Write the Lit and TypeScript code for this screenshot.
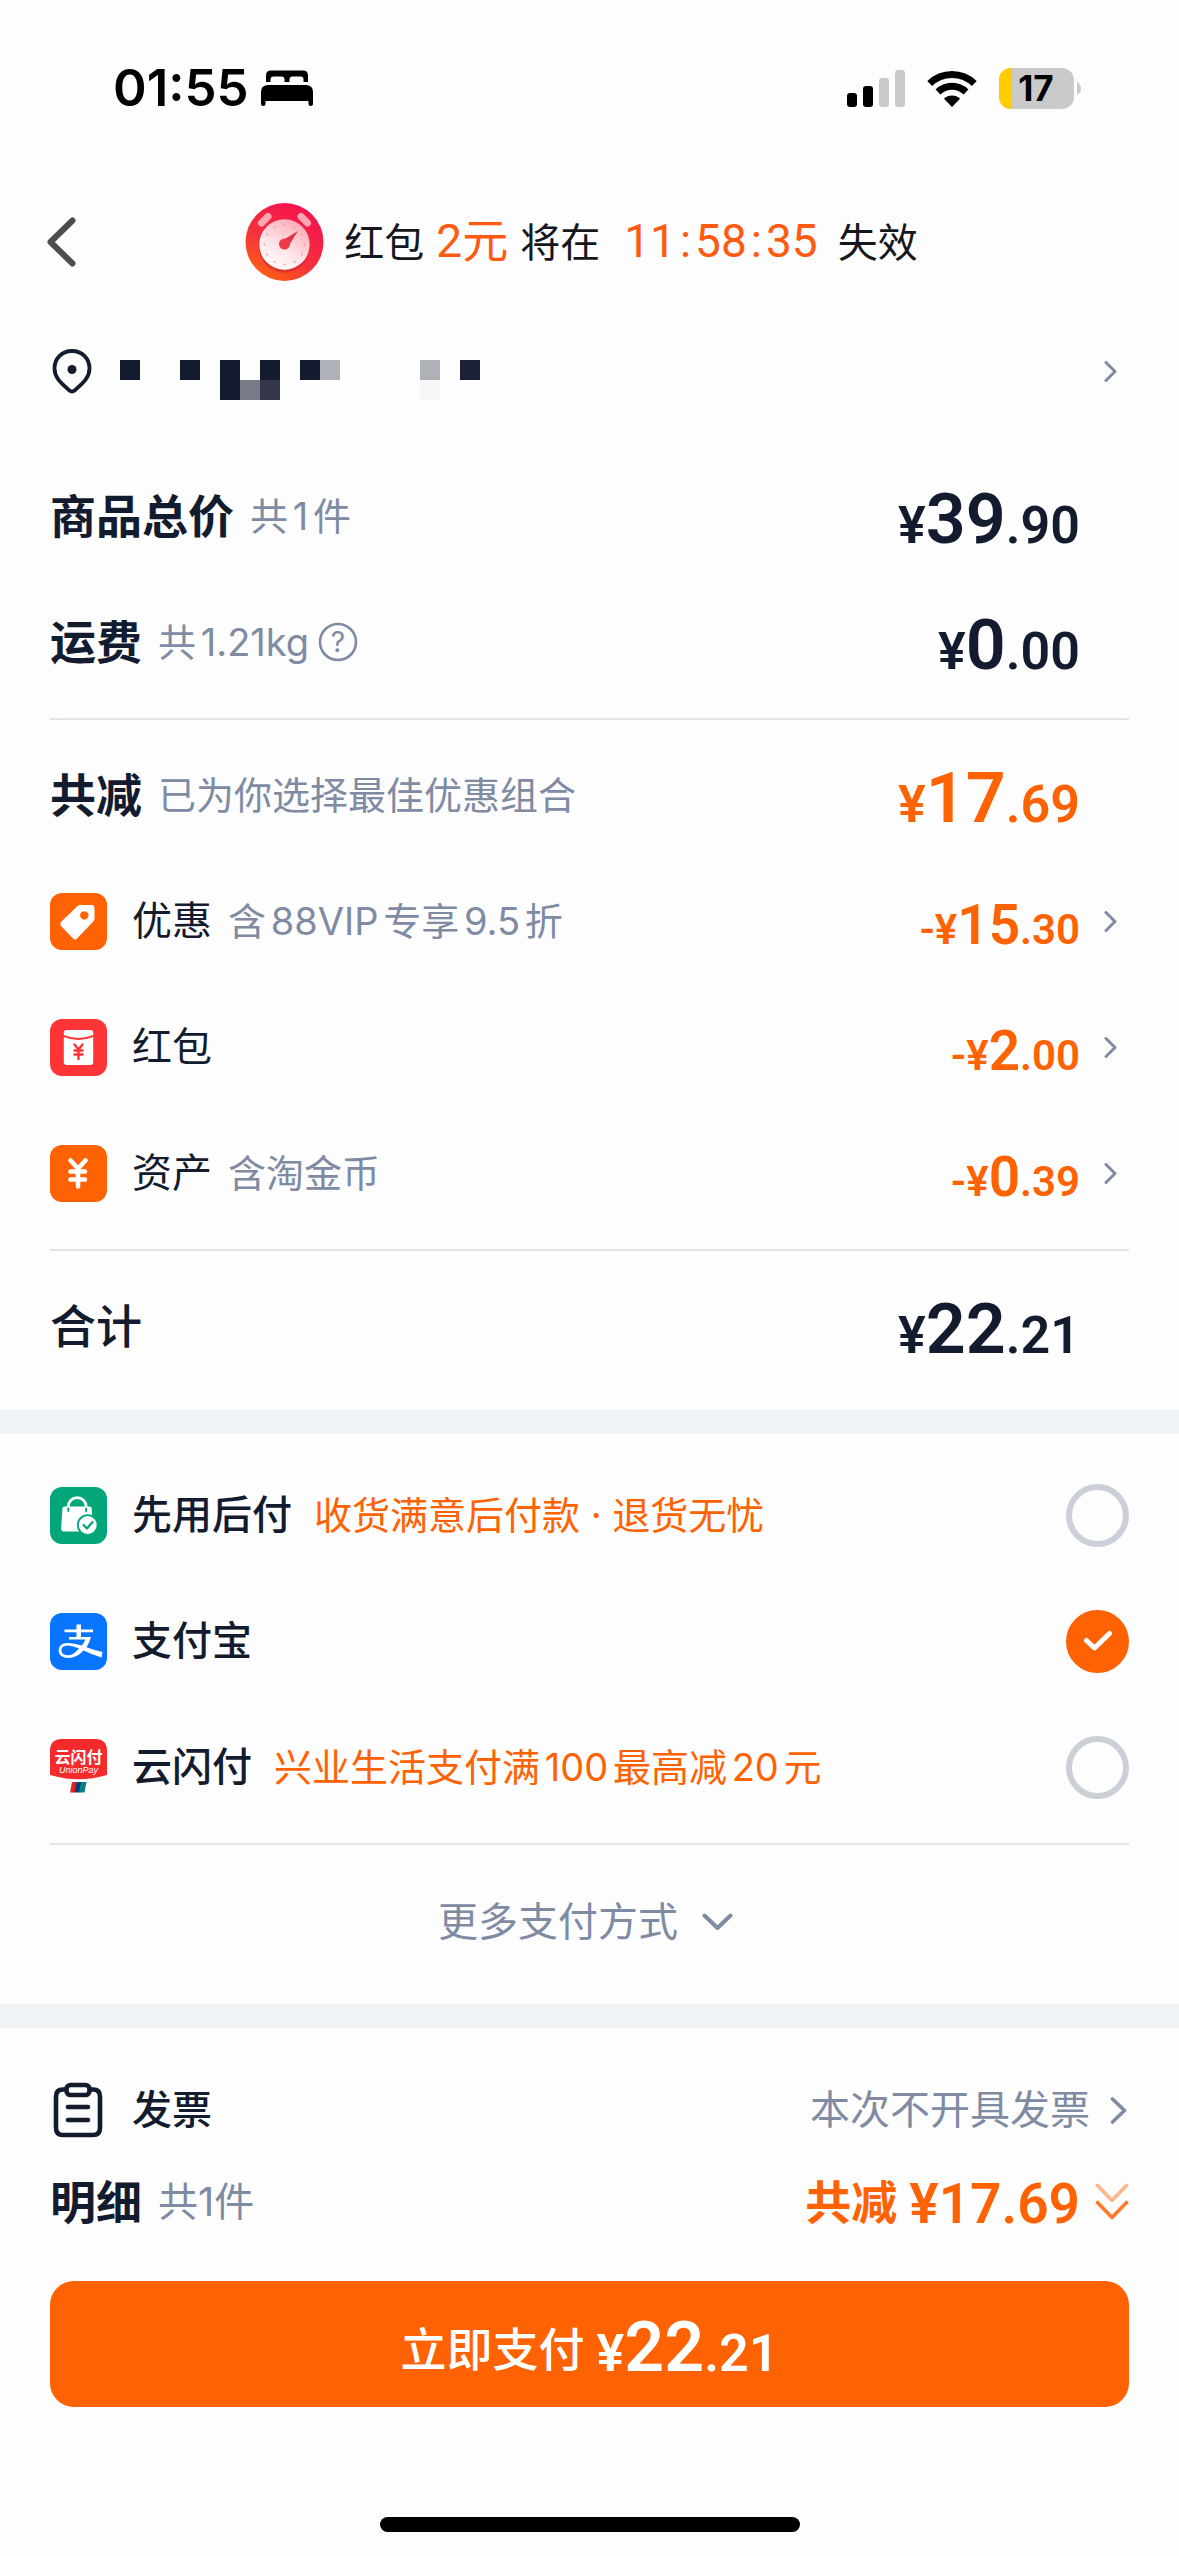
import { LitElement, html, svg, css, nothing } from "lit";
import type { TemplateResult } from "lit";
import { customElement, property, state } from "lit/decorators.js";

const chevron = html`<svg class="chev" viewBox="0 0 13 21" width="13" height="21" aria-hidden="true">
  <path d="M2 1.5 L11 10.5 L2 19.5" fill="none" stroke="#7f8ba3" stroke-width="3" stroke-linecap="round" stroke-linejoin="round"/>
</svg>`;

const tile = (fill: string, content: unknown) => html`<svg class="tile" viewBox="0 0 57 57" width="57" height="57" aria-hidden="true">
  <rect width="57" height="57" rx="12" fill=${fill}/>${content}
</svg>`;

const icons: Record<string, TemplateResult> = {
  tag: tile("#ff6203", svg`
    <path fill="#fff" fill-rule="evenodd" d="M30 12 H41.500 Q44.500 12 44.500 15 V25.500 Q44.500 27 43.500 28.200 L27 45.500 Q25 47.300 23 45.500 L11 33 Q9.300 31 11 29 L27.500 13 Q28.500 12 30 12 Z M34.300 18.200 a4.200 4.200 0 1 0 0.010 0 Z"/>`),
  packet: tile("#ff3437", svg`
    <path fill="#fff" d="M16.500 11 H40.500 Q43.200 11 43.200 13.800 V16 Q28.500 22 13.800 16 V13.800 Q13.800 11 16.500 11 Z"/>
    <path fill="#fff" d="M13.800 18 Q28.500 24.200 43.200 18 V43 Q43.200 46 40.200 46 H16.800 Q13.800 46 13.800 43 Z"/>
    <path fill="none" stroke="#ff3437" stroke-width="2.400" stroke-linecap="round" d="M24.500 25.500 L28.500 30.500 L32.500 25.500 M24.500 31.500 H32.500 M24.500 35.500 H32.500 M28.500 30.500 V40"/>`),
  yen: tile("#ff6203", svg`
    <path fill="none" stroke="#fff" stroke-width="4.600" stroke-linecap="round" stroke-linejoin="round" d="M20.500 15.500 L28 23.500 L35.500 15.500 M20.500 26.500 H35 M20.500 34.500 H35 M28 24 V41.500"/>`),
  bag: tile("#03a678", svg`
    <path fill="none" stroke="#fff" stroke-width="2.800" d="M18.300 23 V19.500 A8.900 8.900 0 0 1 36.100 19.500 V23"/>
    <path fill="#fff" d="M14.500 19.500 H39.500 Q41.500 19.500 41.700 21.500 L43 41 Q43.200 44.500 40 44.500 H14 Q11 44.500 11.200 41 L12.400 21.500 Q12.600 19.500 14.500 19.500 Z"/>
    <path stroke="#03a678" stroke-width="2" stroke-linecap="round" d="M18.300 21.500 V24 M36.100 21.500 V24"/>
    <circle cx="37.700" cy="38" r="10.800" fill="#03a678"/>
    <circle cx="37.700" cy="38" r="9" fill="#fff"/>
    <path fill="none" stroke="#03a678" stroke-width="2.200" stroke-linecap="round" stroke-linejoin="round" d="M33.500 38 L37 41.500 L42.500 35"/>`),
  alipay: tile("#0775ff", svg`
    <path fill="#fff" d="M26.500 11.500 H31 V16.500 H43 V19.300 H31 V24 H41 Q39.500 29.800 36.500 34.200 Q43 36.800 52.500 39 L51.500 44.500 Q42 41.500 33.500 37.500 Q26.500 45 18.500 45 Q9 44.800 8.500 37.500 Q8.800 30.300 17.500 30 Q24.500 30 31.800 32.500 Q34.300 29.500 35.300 26.500 H19 V24 H26.500 V19.300 H14.500 V16.500 H26.500 Z"/>
    <path fill="#0775ff" d="M29 35.400 Q22 32.500 17 32.500 Q11.500 33 11.300 37.200 Q11.700 42 17.500 42.200 Q23.500 42.200 29 35.400 Z"/>`),
  unionpay: html`<svg class="tile" viewBox="0 0 57 57" width="57" height="57" aria-hidden="true">
    <path fill="#f52a2a" d="M12 0 H45 Q57 0 57 12 V36 Q28.500 44.500 0 36 V12 Q0 0 12 0 Z"/>
    <text x="28.500" y="23.500" class="up-cn" text-anchor="middle">云闪付</text>
    <text x="28.500" y="34" class="up-en" text-anchor="middle">UnionPay</text>
    <path fill="#e1251b" d="M22 43 H27 L25 53.500 H20 Z"/>
    <path fill="#0b3c78" d="M26.500 43 H31.500 L29.500 53.500 H24.500 Z"/>
    <path fill="#0a7f80" d="M31 43 H36.500 L34.500 53.500 H29 Z"/>
  </svg>`,
};

/** Amount with a large integer part and a smaller currency sign and fraction. */
@customElement("price-tag")
class PriceTag extends LitElement {
  @property() value = "0.00";
  @property() sign = "";
  @property({ reflect: true }) size = "large";

  static styles = css`
    :host {
      display: block;
      padding-top: 12px;
      font-family: Roboto, "Noto Sans CJK SC", sans-serif;
      font-weight: 600;
      font-size: 52px;
      line-height: 72px;
      white-space: nowrap;
    }
    .int { font-size: 70px; }
    :host([size="small"]) { font-size: 42px; }
    :host([size="small"]) .int { font-size: 55px; }
  `;

  render() {
    const [int, dec] = this.value.split(".");
    return html`${this.sign}¥<span class="int">${int}</span>.${dec}`;
  }
}

interface Discount { icon: string; name: string; note?: string; amount: string }
interface Method { id: string; icon: string; name: string; note?: string }

const discounts: Discount[] = [
  { icon: "tag", name: "优惠", note: "含88VIP专享9.5折", amount: "15.30" },
  { icon: "packet", name: "红包", amount: "2.00" },
  { icon: "yen", name: "资产", note: "含淘金币", amount: "0.39" },
];

const methods: Method[] = [
  { id: "later", icon: "bag", name: "先用后付", note: "收货满意后付款 · 退货无忧" },
  { id: "alipay", icon: "alipay", name: "支付宝" },
  { id: "unionpay", icon: "unionpay", name: "云闪付", note: "兴业生活支付满100最高减20元" },
];

/** Cells of the masked address: column, row, colour. */
const mask: [number, number, string][] = [
  [0, 0, "#131b2e"], [3, 0, "#131b2e"], [5, 0, "#131b2e"], [7, 0, "#131b2e"],
  [9, 0, "#131b2e"], [10, 0, "#afb1b9"], [15, 0, "#afb1b9"], [17, 0, "#1b2036"],
  [5, 1, "#131b2e"], [6, 1, "#777b85"], [7, 1, "#34384a"], [15, 1, "#f6f7f9"],
];

@customElement("app-root")
class AppRoot extends LitElement {
  @state() private method = "alipay";

  static styles = css`
    :host {
      display: flex;
      flex-direction: column;
      min-height: 100vh;
      background: #fdfdfd;
      color: #131b2e;
      font-family: Inter, "Noto Sans CJK SC", sans-serif;
      font-size: 40px;
      line-height: 60px;
      text-autospace: normal;
    }
    svg { display: block; flex: none; }
    button {
      margin: 0;
      padding: 0;
      border: 0;
      background: none;
      color: inherit;
      font: inherit;
      text-align: left;
      cursor: pointer;
    }

    .status {
      display: flex;
      align-items: center;
      height: 176px;
      padding: 0 97px 0 113px;
      color: #000;
    }
    .time { font-size: 51px; font-weight: 600; margin-right: 12px; }
    .signals { display: flex; align-items: center; gap: 22px; margin-left: auto; }
    .battery-text { font: 700 35px Inter, sans-serif; }

    .top {
      display: grid;
      grid-template-columns: 78px 1fr 90px;
      align-items: center;
      height: 132px;
      padding-left: 46px;
      padding-right: 50px;
    }
    .notice { display: flex; align-items: center; justify-content: center; color: #15171c; }
    .notice-text { margin: 0 0 0 20px; display: flex; align-items: baseline; }
    .hot {
      color: #ff5a12;
      font-family: Roboto, "Noto Sans CJK SC", sans-serif;
      font-size: 46px;
      text-autospace: no-autospace;
    }
    .sum { margin: 0 12px; }
    .timer { display: flex; margin: 0 20px 0 24px; }
    .colon { padding: 0 4px; }

    .address { display: flex; align-items: center; height: 126px; margin: 0 50px 19px; }
    .mask { margin-left: 26px; }
    .address .chev { margin: 0 12px 0 auto; }

    .row {
      display: flex;
      align-items: center;
      width: 100%;
      height: 126px;
      padding: 0 50px;
      box-sizing: border-box;
    }
    .row.short { height: 92px; }
    .title { font-size: 46px; font-weight: 600; margin-right: 16px; }
    .title.medium { font-weight: 500; }
    .note { font-size: 38px; color: #7f8ba3; }
    .note.big { font-size: 40px; text-autospace: no-autospace; }
    .promo { font-size: 38px; color: #ff6203; }
    .tile { margin-right: 25px; }
    .name { margin-right: 16px; }
    .name.strong { font-weight: 500; margin-right: 22px; }
    .slot { flex: none; display: flex; justify-content: flex-end; width: 49px; }
    .slot .chev { margin-right: 12px; }
    .amount { margin-left: auto; }
    .orange { color: #ff6203; }
    .help { margin-left: 9px; }

    .rule { height: 2px; margin: 13px 50px 12px; border: 0; background: #e1e4e9; }
    .band { height: 24px; background: #f1f4f7; }
    .summary { padding-bottom: 21px; }
    .methods { margin: 0; padding: 18px 0 17px; border: 0; min-width: 0; }

    .pick { display: grid; margin-left: auto; }
    .pick > * { grid-area: 1 / 1; }
    .radio {
      appearance: none;
      width: 63px;
      height: 63px;
      margin: 0;
      border: 6px solid #cbcfd8;
      border-radius: 50%;
      box-sizing: border-box;
    }
    .radio:checked { border-color: #ff6203; background: #ff6203; }
    .tick { place-self: center; pointer-events: none; }

    .more {
      display: flex;
      align-items: center;
      justify-content: center;
      gap: 24px;
      width: 100%;
      height: 130px;
      padding-right: 8px;
      box-sizing: border-box;
      color: #7f8ba3;
    }
    .invoice { padding-top: 36px; }
    .state { color: #7f8ba3; margin-left: auto; margin-right: 20px; }
    .clip { margin: 0 29px 0 3px; }
    .saved { display: flex; align-items: center; gap: 12px; margin-left: auto; color: #ff6203; font-size: 46px; font-weight: 600; }
    .flat { font-family: Roboto, sans-serif; font-size: 55px; font-weight: 600; padding-top: 4px; }

    .pay {
      display: flex;
      align-items: center;
      justify-content: center;
      gap: 12px;
      height: 126px;
      margin: 33px 50px 60px;
      border-radius: 24px;
      background: #ff6203;
      color: #fff;
      font-size: 46px;
      font-weight: 500;
    }
    .pay-text { padding-top: 10px; }
    .home { width: 420px; max-width: 60%; height: 15px; margin: auto auto 24px; border-radius: 8px; background: #000; }

    .up-cn { font: 700 16px "Noto Sans CJK SC", sans-serif; fill: #fff; }
    .up-en { font: italic 9px "Liberation Sans", sans-serif; fill: #fff; }
    .q { font: 400 28px Inter, sans-serif; fill: #7f8ba3; }
  `;

  private statusBar() {
    return html`<header class="status">
      <span class="time">01:55</span>
      <svg viewBox="0 0 52 36" width="52" height="36" aria-label="睡眠" role="img">
        <path d="M5 12 V5.500 Q5 0.500 10 0.500 H42 Q47 0.500 47 5.500 V12 H42.500 V9.500 Q42.500 6.500 39.500 6.500 H31.500 Q28.500 6.500 28.500 9.500 V12 H23.500 V9.500 Q23.500 6.500 20.500 6.500 H12.500 Q9.500 6.500 9.500 9.500 V12 Z"/>
        <path d="M6.500 15 H45.500 Q52 15.500 52 22 V34 Q52 36 49.700 36 Q47.500 36 47.500 34 V31 H4.500 V34 Q4.500 36 2.300 36 Q0 36 0 34 V22 Q0 15.500 6.500 15 Z"/>
      </svg>
      <div class="signals">
        <svg viewBox="0 0 58 37" width="58" height="37" role="img" aria-label="信号">
          <rect x="0" y="23" width="10" height="14" rx="3"/>
          <rect x="16" y="16" width="10" height="21" rx="3"/>
          <rect x="32" y="8" width="10" height="29" rx="3" fill="#cacaca"/>
          <rect x="48" y="0" width="10" height="37" rx="3" fill="#cacaca"/>
        </svg>
        <svg viewBox="0 0 50 37" width="50" height="37" role="img" aria-label="Wi-Fi">
          <path fill="none" stroke="#000" stroke-width="7" d="M2.700 13.500 A32 32 0 0 1 47.300 13.500"/>
          <path fill="none" stroke="#000" stroke-width="7" d="M11 22 A20 20 0 0 1 39 22"/>
          <path d="M25 37 L17 28.800 A11.500 11.500 0 0 1 33 28.800 Z"/>
        </svg>
        <svg viewBox="0 0 83 41" width="83" height="41" role="img" aria-label="电量">
          <defs><clipPath id="cell"><rect width="75" height="41" rx="12"/></clipPath></defs>
          <g clip-path="url(#cell)">
            <rect width="75" height="41" fill="#cacaca"/>
            <rect width="13" height="41" fill="#ffcc00"/>
          </g>
          <path fill="#cacaca" d="M78 14 Q82 16 82 20.500 Q82 25 78 27 Z"/>
          <text x="37" y="33" text-anchor="middle" class="battery-text">17</text>
        </svg>
      </div>
    </header>`;
  }

  private clock() {
    const dots = Array.from({ length: 12 }, (_, i) => {
      const a = (i * Math.PI) / 6;
      return svg`<circle cx=${39.5 + 20 * Math.sin(a)} cy=${41.5 - 20 * Math.cos(a)} r="1" fill="#f29aa8"/>`;
    });
    return html`<svg viewBox="0 0 79 78" width="79" height="78" aria-hidden="true">
      <defs>
        <linearGradient id="shell" x1="0.1" y1="1" x2="0.7" y2="0">
          <stop offset="0" stop-color="#ff6a0c"/>
          <stop offset="0.45" stop-color="#f5323c"/>
          <stop offset="1" stop-color="#f4104f"/>
        </linearGradient>
        <linearGradient id="face" x1="0.8" y1="0" x2="0.2" y2="1">
          <stop offset="0" stop-color="#fba6b2"/>
          <stop offset="0.6" stop-color="#fde6e8"/>
          <stop offset="1" stop-color="#ffffff"/>
        </linearGradient>
      </defs>
      <circle cx="39.500" cy="39" r="39" fill="url(#shell)"/>
      <path stroke="#ffa5b0" stroke-width="7" stroke-linecap="round" d="M16.500 20 L23 13.500 M56 13.500 L62.500 20"/>
      <circle cx="39.500" cy="44" r="25.500" fill="#b3202c" opacity="0.45"/>
      <circle cx="39.500" cy="41.500" r="25.200" fill="url(#face)"/>
      ${dots}
      <path fill="#e0334a" d="M36.500 38 L53 28 L43.500 43 Z"/>
      <circle cx="39.500" cy="41" r="5.500" fill="#ef3a4c"/>
    </svg>`;
  }

  private top() {
    return html`<div class="top">
      <button aria-label="返回">
        <svg viewBox="0 0 30 50" width="30" height="50">
          <path d="M26.500 3.500 L4.500 25 L26.500 46.500" fill="none" stroke="#4d4d4f" stroke-width="6" stroke-linecap="round" stroke-linejoin="round"/>
        </svg>
      </button>
      <div class="notice">
        ${this.clock()}
        <p class="notice-text">
          <span>红包</span><span class="hot sum">2元</span><span>将在</span>
          <span class="hot timer"><span>11</span><span class="colon">:</span><span>58</span><span class="colon">:</span><span>35</span></span>
          <span>失效</span>
        </p>
      </div>
    </div>`;
  }

  private address() {
    return html`<button class="address" aria-label="收货地址">
      <svg viewBox="0 0 44 46" width="44" height="46">
        <path d="M22 3 C11.500 3 4.500 11 4.500 20.500 C4.500 30.500 13 36.500 19.500 42.500 Q22 44.500 24.500 42.500 C31 36.500 39.500 30.500 39.500 20.500 C39.500 11 32.500 3 22 3 Z" fill="none" stroke="#131b2e" stroke-width="3.800"/>
        <circle cx="22" cy="21.500" r="4.500" fill="#131b2e"/>
      </svg>
      <svg class="mask" viewBox="0 -29 420 80" width="420" height="80">
        ${mask.map(([c, r, fill]) => svg`<rect x=${c * 20} y=${r * 20} width="20" height="20" fill=${fill}/>`)}
      </svg>
      ${chevron}
    </button>`;
  }

  private discount(d: Discount) {
    return html`<button class="row">
      ${icons[d.icon]}
      <span class="name">${d.name}</span>
      ${d.note ? html`<span class="note">${d.note}</span>` : nothing}
      <price-tag class="amount orange" size="small" sign="-" value=${d.amount}></price-tag>
      <span class="slot">${chevron}</span>
    </button>`;
  }

  private payMethod(m: Method) {
    const on = this.method === m.id;
    return html`<label class="row">
      ${icons[m.icon]}
      <span class="name strong">${m.name}</span>
      ${m.note ? html`<span class="promo">${m.note}</span>` : nothing}
      <span class="pick">
        <input class="radio" type="radio" name="method" .checked=${on} @change=${() => (this.method = m.id)} />
        ${on
          ? html`<svg class="tick" viewBox="0 0 30 22" width="30" height="22" aria-hidden="true">
              <path d="M3.500 10.500 L11.500 18 L26.500 3.500" fill="none" stroke="#fff" stroke-width="5" stroke-linecap="round" stroke-linejoin="round"/>
            </svg>`
          : nothing}
      </span>
    </label>`;
  }

  render() {
    return html`
      ${this.statusBar()} ${this.top()} ${this.address()}
      <section class="summary">
        <div class="row">
          <span class="title">商品总价</span><span class="note">共1件</span>
          <price-tag class="amount" value="39.90"></price-tag><span class="slot"></span>
        </div>
        <div class="row">
          <span class="title">运费</span><span class="note">共1.21kg</span>
          <button class="help" aria-label="运费说明">
            <svg viewBox="0 0 40 40" width="40" height="40">
              <circle cx="20" cy="20" r="18" fill="none" stroke="#7f8ba3" stroke-width="2.600"/>
              <text class="q" x="20" y="30" text-anchor="middle">?</text>
            </svg>
          </button>
          <price-tag class="amount" value="0.00"></price-tag><span class="slot"></span>
        </div>
        <hr class="rule" />
        <div class="row">
          <span class="title">共减</span><span class="note">已为你选择最佳优惠组合</span>
          <price-tag class="amount orange" value="17.69"></price-tag><span class="slot"></span>
        </div>
        ${discounts.map((d) => this.discount(d))}
        <hr class="rule" />
        <div class="row">
          <span class="title medium">合计</span>
          <price-tag class="amount" value="22.21"></price-tag><span class="slot"></span>
        </div>
      </section>
      <div class="band"></div>
      <fieldset class="methods" aria-label="支付方式">
        ${methods.map((m) => this.payMethod(m))}
        <hr class="rule" />
        <button class="more">
          更多支付方式
          <svg viewBox="0 0 31 18" width="31" height="18" aria-hidden="true">
            <path d="M2.500 2.500 L15.500 15 L28.500 2.500" fill="none" stroke="#7f8ba3" stroke-width="4" stroke-linecap="round" stroke-linejoin="round"/>
          </svg>
        </button>
      </fieldset>
      <div class="band"></div>
      <section class="invoice">
        <button class="row short">
          <svg class="clip" viewBox="0 0 50 56" width="50" height="56" aria-hidden="true">
            <g fill="none" stroke="#131b2e" stroke-width="4.600" stroke-linecap="round" stroke-linejoin="round">
              <path d="M13 7.500 H10 Q3 7.500 3 14.500 V46 Q3 53 10 53 H40 Q47 53 47 46 V14.500 Q47 7.500 40 7.500 H37"/>
              <rect x="13.500" y="3" width="23" height="10" rx="4"/>
              <path d="M15 25 H35 M15 38 H35"/>
            </g>
          </svg>
          <span class="name strong">发票</span>
          <span class="state">本次不开具发票</span>
          <svg viewBox="0 0 19 27" width="19" height="27" aria-hidden="true">
            <path d="M2.500 2 L14.500 13.500 L2.500 25" fill="none" stroke="#7f8ba3" stroke-width="3.600" stroke-linecap="round" stroke-linejoin="round"/>
          </svg>
        </button>
        <button class="row short">
          <span class="title">明细</span><span class="note big">共1件</span>
          <span class="saved"><span>共减</span><span class="flat">¥17.69</span></span>
          <span class="slot">
            <svg viewBox="0 0 34 38" width="34" height="38" aria-hidden="true">
              <g fill="none" stroke="#ff6203" stroke-width="3.600" stroke-linecap="round" stroke-linejoin="round">
                <path d="M2.500 2.500 L17 17.500 L31.500 2.500" opacity="0.45"/>
                <path d="M2.500 19.500 L17 34.500 L31.500 19.500" opacity="0.85"/>
              </g>
            </svg>
          </span>
        </button>
      </section>
      <button class="pay"><span class="pay-text">立即支付</span><price-tag value="22.21"></price-tag></button>
      <div class="home"></div>
    `;
  }
}
